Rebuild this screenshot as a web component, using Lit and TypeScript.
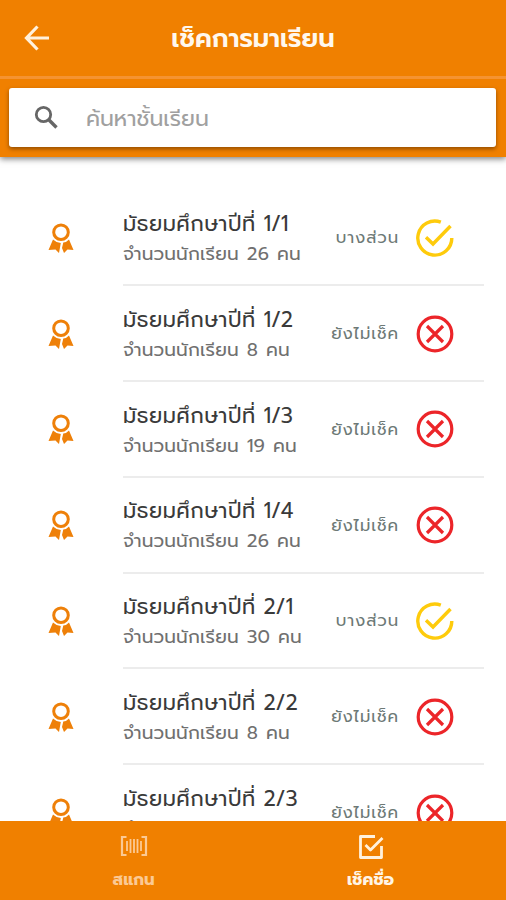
import { LitElement, html, svg, css } from "lit";
import { customElement, property } from "lit/decorators.js";

interface Room { name: string; count: number; partial: boolean; }

const ROOMS: Room[] = [
  { name: "1/1", count: 26, partial: true },
  { name: "1/2", count: 8, partial: false },
  { name: "1/3", count: 19, partial: false },
  { name: "1/4", count: 26, partial: false },
  { name: "2/1", count: 30, partial: true },
  { name: "2/2", count: 8, partial: false },
  { name: "2/3", count: 19, partial: false },
];

const FONT = css`"Prompt", "Kanit", "Noto Sans Thai", "Open Sans", "Noto Sans", sans-serif`;

@customElement("room-row")
class RoomRow extends LitElement {
  @property({ attribute: false }) room!: Room;

  static styles = css`
    :host { display: flex; height: 95.8px; padding-right: 22px; box-sizing: border-box; font-family: ${FONT}; }
    .badge { width: 123px; padding: 1px 0 0 47px; box-sizing: border-box; display: flex; align-items: center; flex: none; }
    .body { flex: 1; display: flex; align-items: center; justify-content: space-between; border-bottom: 2px solid #ececec; padding-right: 30px; }
    .text { white-space: nowrap; padding-top: 3.500px; }
    .title { display: flex; gap: 8px; font-size: 21px; letter-spacing: .5px; line-height: 30px; color: #3a3a3a; }
    .num { letter-spacing: -.2px; }
    .sub { display: flex; gap: 8px; font-size: 18.500px; letter-spacing: .15px; line-height: 30px; color: #707070; }
    .right { display: flex; align-items: center; gap: 17px; padding-top: 1px; }
    .status { font-size: 16.500px; letter-spacing: .9px; color: #6d7976; white-space: nowrap; }
    svg { display: block; flex: none; }
  `;

  render() {
    const r = this.room;
    return html`
      <div class="badge">
        <svg width="28" height="32" viewBox="0 0 28 32">
          <circle cx="14" cy="9.200" r="7.300" fill="none" stroke="#ee8009" stroke-width="3" />
          <path d="M6 16.500 Q9 19.500 13.800 20 L12 30 L8.500 26.500 L1.500 27 Z M22 16.500 L26.500 27 L20.500 26.500 L17 30 L15 25 L16.300 19.500 Q20 19 22 16.500Z" fill="#ee8009" />
        </svg>
      </div>
      <div class="body">
        <div class="text">
          <div class="title"><span>มัธยมศึกษาปีที่</span><span class="num">${r.name}</span></div>
          <div class="sub"><span>จำนวนนักเรียน</span><span>${r.count}</span><span>คน</span></div>
        </div>
        <div class="right">
          <span class="status">${r.partial ? "บางส่วน" : "ยังไม่เช็ค"}</span>
          <svg width="38" height="38" viewBox="0 0 38 38" fill="none" stroke-width="3.200">
            ${r.partial
              ? svg`<path d="M24.800 3.200 A17 17 0 1 0 35.800 19 M10 18.300 L17 25 L34.500 7" stroke="#fecb0c" stroke-width="3.400" />`
              : svg`<circle cx="19" cy="19" r="16.800" stroke="#ec2529" /><path d="M11 11 L27 27 M27 11 L11 27" stroke="#ec2529" />`}
          </svg>
        </div>
      </div>`;
  }
}

@customElement("app-root")
class AppRoot extends LitElement {
  static styles = css`
    :host { display: flex; flex-direction: column; height: 900px; overflow: hidden; background: #fff; font-family: ${FONT}; }
    svg { display: block; }
    .top { flex: none; height: 157px; background: #f08000; box-shadow: 0 2px 6px rgba(0,0,0,.5); z-index: 1; }
    .bar { height: 79px; box-sizing: border-box; border-bottom: 3px solid #f59331; display: grid; grid-template-columns: 74px 1fr 74px; align-items: center; }
    .back { padding-left: 23px; }
    .heading { color: #fff8ee; font-weight: 600; font-size: 25.800px; text-align: center; white-space: nowrap; padding-top: 1px; }
    .search { margin: 9px 10px 0 9px; height: 59px; background: #fff; border-radius: 3px; box-shadow: 0 2px 4px rgba(80,40,0,.6); display: flex; align-items: center; padding-left: 25px; gap: 27px; box-sizing: border-box; }
    .hint { color: #a0a0a0; font-size: 22px; padding-top: 2px; }
    .list { flex: 1; min-height: 0; overflow: hidden; padding-top: 33.400px; }
    .nav { flex: none; height: 79px; background: #f08000; display: grid; grid-template-columns: 267px 207px; }
    .item { display: flex; flex-direction: column; align-items: center; padding-top: 13px; gap: 7px; font-weight: 700; font-size: 16.500px; line-height: 26px; color: #fff5e6; }
    .dim { color: #fbc994; gap: 9px; }
  `;

  render() {
    return html`
      <header class="top">
        <div class="bar">
          <svg class="back" width="28" height="28" viewBox="0 0 28 28" fill="none" stroke="#fff1dd" stroke-width="3.200">
            <path d="M26 14 H4 M14.500 2.500 L3.500 14 L14.500 25.500" />
          </svg>
          <div class="heading">เช็คการมาเรียน</div>
        </div>
        <div class="search">
          <svg width="25" height="25" viewBox="0 0 25 25" fill="none" stroke="#666">
            <circle cx="9.500" cy="9.500" r="7.200" stroke-width="2.800" /><path d="M14.800 14.800 L22.500 22.500" stroke-width="3.400" />
          </svg>
          <span class="hint">ค้นหาชั้นเรียน</span>
        </div>
      </header>
      <main class="list">${ROOMS.map((r) => html`<room-row .room=${r}></room-row>`)}</main>
      <nav class="nav">
        <div class="item dim">
          <svg width="28" height="24" viewBox="0 0 28 24" fill="none" stroke="#fbc994" stroke-width="2.200">
            <path d="M6.500 3 H2 V21 H6.500 M21.500 3 H26 V21 H21.500" />
            <path d="M7 7 V17 M10.500 5 V19 M14 5 V19 M17.500 5 V19 M21 7 V17" stroke-width="1.800" />
          </svg>
          <span>สแกน</span>
        </div>
        <div class="item">
          <svg width="26" height="26" viewBox="0 0 26 26" fill="none" stroke="#fff1dd" stroke-width="2.800" stroke-linejoin="round">
            <path d="M17 2.500 H2.500 V23.500 H23.500 V12 M7.500 11 L12.500 16 L24.500 4" />
          </svg>
          <span>เช็คชื่อ</span>
        </div>
      </nav>`;
  }
}
